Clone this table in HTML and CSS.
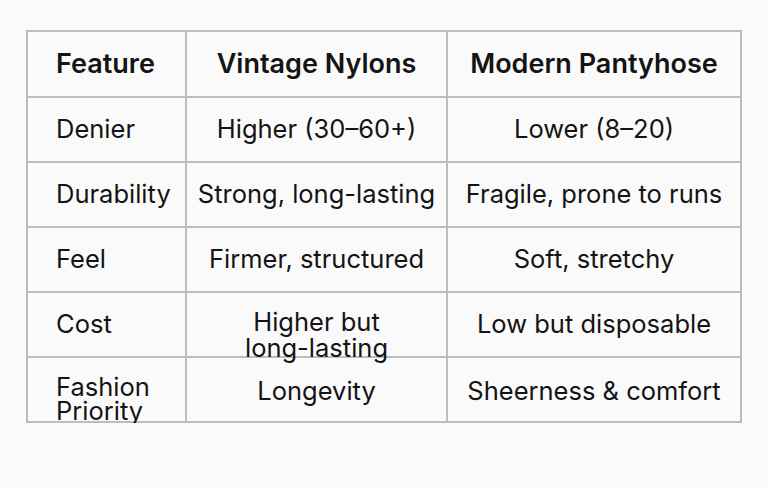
FILE: index.html
```html
<!DOCTYPE html>
<html lang="en">
<head>
<meta charset="utf-8">
<title>Vintage Nylons vs Modern Pantyhose</title>
<link rel="stylesheet" href="styles.css">
</head>
<body>
<main class="page">
  <table class="compare">
    <colgroup>
      <col class="c1">
      <col class="c2">
      <col class="c3">
    </colgroup>
    <thead>
      <tr>
        <th class="first">Feature</th>
        <th>Vintage Nylons</th>
        <th>Modern Pantyhose</th>
      </tr>
    </thead>
    <tbody>
      <tr>
        <td class="first">Denier</td>
        <td>Higher (30–60+)</td>
        <td>Lower (8–20)</td>
      </tr>
      <tr>
        <td class="first">Durability</td>
        <td>Strong, long-lasting</td>
        <td>Fragile, prone to runs</td>
      </tr>
      <tr>
        <td class="first">Feel</td>
        <td>Firmer, structured</td>
        <td>Soft, stretchy</td>
      </tr>
      <tr>
        <td class="first">Cost</td>
        <td><div class="two cost">Higher but<br>long-lasting</div></td>
        <td>Low but disposable</td>
      </tr>
      <tr>
        <td class="first"><div class="two fashion">Fashion<br>Priority</div></td>
        <td class="nudge">Longevity</td>
        <td class="nudge">Sheerness &amp; comfort</td>
      </tr>
    </tbody>
  </table>
</main>
</body>
</html>
```
FILE: styles.css
```css
html, body {
  margin: 0;
  padding: 0;
  background: #fafafa;
}
.page {
  padding: 30px 0 0 26px;
}
.compare {
  border-collapse: collapse;
  table-layout: fixed;
  width: 716px;
  font-family: Inter, "Liberation Sans", sans-serif;
  font-size: 25.5px;
  color: #141414;
  background: #fafafa;
}
.c1 { width: 159px; }
.c2 { width: 261px; }
.c3 { width: 294px; }
.compare th,
.compare td {
  border: 2px solid #bdbdbd;
  height: 63px;
  padding: 0;
  text-align: center;
  vertical-align: middle;
  white-space: nowrap;
  line-height: 1.2;
}
.compare th {
  font-weight: 600;
  font-size: 27px;
  height: 64px;
}
.compare .first {
  text-align: left;
  padding-left: 28px;
}
.two.cost {
  line-height: 26px;
  margin-bottom: -20px;
}
.two.fashion {
  line-height: 24px;
  margin-bottom: -18px;
}
.compare .nudge {
  padding-top: 4px;
  height: 59px;
}
```
